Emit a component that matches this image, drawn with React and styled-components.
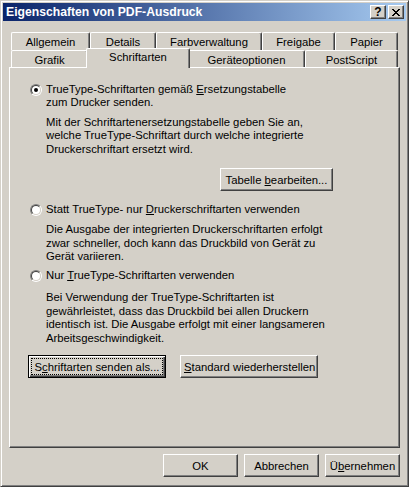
import React from "react";
import styled, { createGlobalStyle, css } from "styled-components";

const GlobalStyle = createGlobalStyle`
  html, body {
    margin: 0;
    padding: 0;
    background: #d4d0c8;
  }
  body {
    font-family: "Liberation Sans", Arial, sans-serif;
    font-size: 11.3px;
    color: #000;
  }
`;

const Window = styled.div`
  box-sizing: border-box;
  width: 409px;
  height: 487px;
  padding: 2px;
  background: #d4d0c8;
  border: 1px solid;
  border-color: #d4d0c8 #404040 #404040 #d4d0c8;
  box-shadow: inset 1px 1px #fff, inset -1px -1px #808080;
  display: flex;
  flex-direction: column;
`;

const TitleBar = styled.div`
  height: 18px;
  padding: 0 2px 0 3px;
  display: flex;
  align-items: center;
  justify-content: space-between;
  background: linear-gradient(to right, #0a246a, #a6caf0);
`;

const TitleText = styled.span`
  color: #fff;
  font-weight: bold;
  font-size: 12.2px;
  white-space: nowrap;
`;

const TitleButtons = styled.div`
  display: flex;
  gap: 2px;
`;

const TitleButton = styled.span`
  box-sizing: border-box;
  width: 16px;
  height: 14px;
  display: flex;
  align-items: center;
  justify-content: center;
  background: #d4d0c8;
  border: 1px solid;
  border-color: #fff #404040 #404040 #fff;
  box-shadow: inset -1px -1px #808080;
  font-weight: bold;
  font-size: 12px;
  line-height: 12px;
`;

const Sheet = styled.div`
  margin-top: 11px;
  padding: 0 6px;
  display: flex;
  flex-direction: column;
`;

const TabStrip = styled.div`
  padding: 0 2px;
  display: flex;
  flex-direction: column;
`;

const TabRow = styled.div`
  display: flex;
  align-items: flex-end;
  height: ${(p) => p.$h}px;
`;

const Tab = styled.div`
  box-sizing: border-box;
  flex: 0 0 ${(p) => p.$w}px;
  height: 100%;
  padding-top: 1px;
  display: flex;
  align-items: center;
  justify-content: center;
  white-space: nowrap;
  background: #d4d0c8;
  border-left: 1px solid #fff;
  border-top: 1px solid #fff;
  border-right: 1px solid #404040;
  border-radius: 2px 2px 0 0;
  box-shadow: inset -1px 0 #808080;
  ${(p) =>
    p.$active &&
    css`
      position: relative;
      z-index: 2;
      flex-basis: ${p.$w + 4}px;
      height: 20px;
      margin: -2px -2px -1px;
      padding-top: 0;
      padding-bottom: 3px;
    `}
`;

const Panel = styled.div`
  box-sizing: border-box;
  height: 381px;
  padding: 15px 0 0 20px;
  border-left: 1px solid #fff;
  border-top: 1px solid #fff;
  border-right: 1px solid #404040;
  border-bottom: 1px solid #404040;
  box-shadow: inset -1px -1px #808080;
  display: flex;
  flex-direction: column;
  align-items: flex-start;
`;

const RadioRow = styled.label`
  display: grid;
  grid-template-columns: 12px auto;
  column-gap: 4px;
  align-items: start;
  line-height: 13px;
  white-space: nowrap;
  margin-top: ${(p) => p.$mt || 0}px;
`;

const RadioOuter = styled.span`
  box-sizing: border-box;
  width: 12px;
  height: 12px;
  margin-top: 1px;
  display: flex;
  border-radius: 50%;
  border: 1px solid;
  border-color: #808080 #fff #fff #808080;
`;

const RadioInner = styled.span`
  flex: 1;
  display: flex;
  align-items: center;
  justify-content: center;
  border-radius: 50%;
  border: 1px solid;
  border-color: #404040 #d4d0c8 #d4d0c8 #404040;
  background: #fff;
`;

const RadioDot = styled.span`
  width: 4px;
  height: 4px;
  border-radius: 50%;
  background: #000;
`;

const Description = styled.p`
  margin: ${(p) => p.$mt}px 0 0 16px;
  line-height: 13.4px;
  white-space: nowrap;
`;

const ButtonRow = styled.div`
  display: flex;
  gap: ${(p) => p.$gap || 0}px;
  margin: ${(p) => p.$mt}px 0 0 ${(p) => p.$ml}px;
`;

const Button = styled.button`
  box-sizing: border-box;
  width: ${(p) => p.$w}px;
  height: 23px;
  padding: 0;
  display: flex;
  background: #d4d0c8;
  color: #000;
  font: 11.3px "Liberation Sans", Arial, sans-serif;
  border: 1px solid;
  border-color: #fff #404040 #404040 #fff;
  box-shadow: inset -1px -1px #808080;
  ${(p) =>
    p.$default &&
    css`
      border-color: #000;
      box-shadow: inset 1px 1px #fff, inset -1px -1px #404040,
        inset -2px -2px #808080;
    `}
`;

const ButtonFace = styled.span`
  flex: 1;
  margin: 2px;
  display: flex;
  align-items: center;
  justify-content: center;
  white-space: nowrap;
  border: 1px dotted ${(p) => (p.$focus ? "#000" : "transparent")};
`;

const Footer = styled.div`
  margin-top: 6px;
  display: flex;
  justify-content: flex-end;
  gap: 6px;
`;

const topTabs = [
  { label: "Allgemein", w: 79 },
  { label: "Details", w: 66 },
  { label: "Farbverwaltung", w: 106 },
  { label: "Freigabe", w: 73 },
  { label: "Papier", w: 63 },
];

const frontTabs = [
  { label: "Grafik", w: 77 },
  { label: "Schriftarten", w: 100, active: true },
  { label: "Geräteoptionen", w: 117 },
  { label: "PostScript", w: 93 },
];

function CloseGlyph() {
  const rows = ["11000011", "01100110", "00111100", "00011000", "00111100", "01100110", "11000011"];
  return (
    <svg width="8" height="7" shapeRendering="crispEdges">
      {rows.flatMap((r, y) =>
        r.split("").map((c, x) =>
          c === "1" ? <rect key={`${x}-${y}`} x={x} y={y} width="1" height="1" fill="#000" /> : null
        )
      )}
    </svg>
  );
}

function Radio({ checked }) {
  return (
    <RadioOuter>
      <RadioInner>{checked && <RadioDot />}</RadioInner>
    </RadioOuter>
  );
}

function PushButton({ w, isDefault, focus, children }) {
  return (
    <Button $w={w} $default={isDefault}>
      <ButtonFace $focus={focus}>
        <span>{children}</span>
      </ButtonFace>
    </Button>
  );
}

export default function App() {
  return (
    <>
      <GlobalStyle />
      <Window>
        <TitleBar>
          <TitleText>Eigenschaften von PDF-Ausdruck</TitleText>
          <TitleButtons>
            <TitleButton>?</TitleButton>
            <TitleButton>
              <CloseGlyph />
            </TitleButton>
          </TitleButtons>
        </TitleBar>

        <Sheet>
          <TabStrip>
            <TabRow $h={18}>
              {topTabs.map((t) => (
                <Tab key={t.label} $w={t.w}>
                  {t.label}
                </Tab>
              ))}
            </TabRow>
            <TabRow $h={17}>
              {frontTabs.map((t) => (
                <Tab key={t.label} $w={t.w} $active={t.active}>
                  {t.label}
                </Tab>
              ))}
            </TabRow>
          </TabStrip>

          <Panel>
            <RadioRow>
              <Radio checked />
              <span>
                TrueType-Schriftarten gemäß <u>E</u>rsetzungstabelle
                <br />
                zum Drucker senden.
              </span>
            </RadioRow>
            <Description $mt={7}>
              Mit der Schriftartenersetzungstabelle geben Sie an,
              <br />
              welche TrueType-Schriftart durch welche integrierte
              <br />
              Druckerschriftart ersetzt wird.
            </Description>
            <ButtonRow $mt={12} $ml={190}>
              <PushButton w={113}>
                Tabelle <u>b</u>earbeiten...
              </PushButton>
            </ButtonRow>

            <RadioRow $mt={12}>
              <Radio />
              <span>
                Statt TrueType- nur <u>D</u>ruckerschriftarten verwenden
              </span>
            </RadioRow>
            <Description $mt={7}>
              Die Ausgabe der integrierten Druckerschriftarten erfolgt
              <br />
              zwar schneller, doch kann das Druckbild von Gerät zu
              <br />
              Gerät variieren.
            </Description>

            <RadioRow $mt={6}>
              <Radio />
              <span>
                Nur <u>T</u>rueType-Schriftarten verwenden
              </span>
            </RadioRow>
            <Description $mt={9}>
              Bei Verwendung der TrueType-Schriftarten ist
              <br />
              gewährleistet, dass das Druckbild bei allen Druckern
              <br />
              identisch ist. Die Ausgabe erfolgt mit einer langsameren
              <br />
              Arbeitsgeschwindigkeit.
            </Description>

            <ButtonRow $mt={10} $ml={-2} $gap={14}>
              <PushButton w={138} isDefault focus>
                S<u>c</u>hriftarten senden als...
              </PushButton>
              <PushButton w={138}>
                <u>S</u>tandard wiederherstellen
              </PushButton>
            </ButtonRow>
          </Panel>

          <Footer>
            <PushButton w={75}>OK</PushButton>
            <PushButton w={75}>Abbrechen</PushButton>
            <PushButton w={75}>
              Ü<u>b</u>ernehmen
            </PushButton>
          </Footer>
        </Sheet>
      </Window>
    </>
  );
}
